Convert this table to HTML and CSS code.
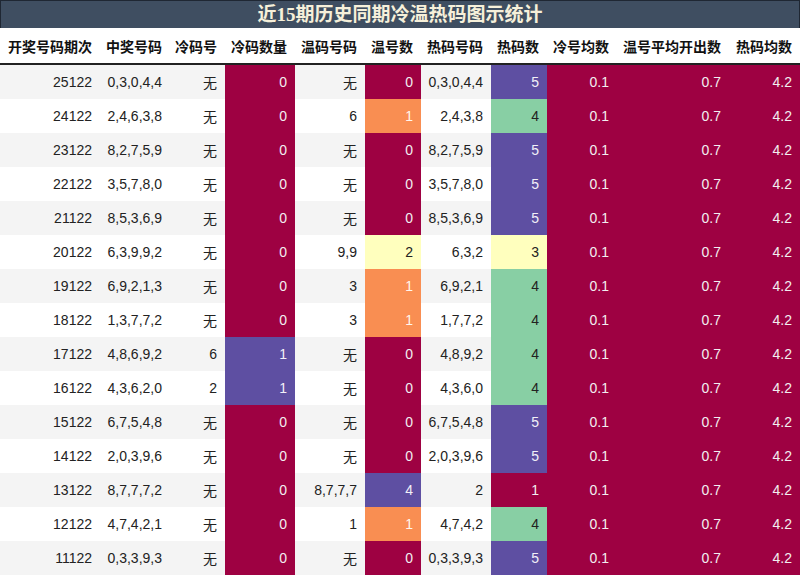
FILE: index.html
```html
<!DOCTYPE html>
<html>
<head>
<meta charset="utf-8">
<link rel="stylesheet" href="styles.css">
</head>
<body>
<div class="title">近15期历史同期冷温热码图示统计</div>
<table class="stats">
<colgroup>
<col style="width:100px"><col style="width:70px"><col style="width:55px"><col style="width:70px"><col style="width:70px"><col style="width:56px"><col style="width:70px"><col style="width:56px"><col style="width:70px"><col style="width:112px"><col style="width:71px">
</colgroup>
<thead>
<tr><th>开奖号码期次</th><th>中奖号码</th><th>冷码号</th><th>冷码数量</th><th>温码号码</th><th>温号数</th><th>热码号码</th><th>热码数</th><th>冷号均数</th><th>温号平均开出数</th><th>热码均数</th></tr>
</thead>
<tbody>
<tr><td>25122</td><td>0,3,0,4,4</td><td>无</td><td class="red">0</td><td>无</td><td class="red">0</td><td>0,3,0,4,4</td><td class="purple">5</td><td class="red">0.1</td><td class="red">0.7</td><td class="red">4.2</td></tr>
<tr><td>24122</td><td>2,4,6,3,8</td><td>无</td><td class="red">0</td><td>6</td><td class="orange">1</td><td>2,4,3,8</td><td class="green">4</td><td class="red">0.1</td><td class="red">0.7</td><td class="red">4.2</td></tr>
<tr><td>23122</td><td>8,2,7,5,9</td><td>无</td><td class="red">0</td><td>无</td><td class="red">0</td><td>8,2,7,5,9</td><td class="purple">5</td><td class="red">0.1</td><td class="red">0.7</td><td class="red">4.2</td></tr>
<tr><td>22122</td><td>3,5,7,8,0</td><td>无</td><td class="red">0</td><td>无</td><td class="red">0</td><td>3,5,7,8,0</td><td class="purple">5</td><td class="red">0.1</td><td class="red">0.7</td><td class="red">4.2</td></tr>
<tr><td>21122</td><td>8,5,3,6,9</td><td>无</td><td class="red">0</td><td>无</td><td class="red">0</td><td>8,5,3,6,9</td><td class="purple">5</td><td class="red">0.1</td><td class="red">0.7</td><td class="red">4.2</td></tr>
<tr><td>20122</td><td>6,3,9,9,2</td><td>无</td><td class="red">0</td><td>9,9</td><td class="yellow">2</td><td>6,3,2</td><td class="yellow">3</td><td class="red">0.1</td><td class="red">0.7</td><td class="red">4.2</td></tr>
<tr><td>19122</td><td>6,9,2,1,3</td><td>无</td><td class="red">0</td><td>3</td><td class="orange">1</td><td>6,9,2,1</td><td class="green">4</td><td class="red">0.1</td><td class="red">0.7</td><td class="red">4.2</td></tr>
<tr><td>18122</td><td>1,3,7,7,2</td><td>无</td><td class="red">0</td><td>3</td><td class="orange">1</td><td>1,7,7,2</td><td class="green">4</td><td class="red">0.1</td><td class="red">0.7</td><td class="red">4.2</td></tr>
<tr><td>17122</td><td>4,8,6,9,2</td><td>6</td><td class="purple">1</td><td>无</td><td class="red">0</td><td>4,8,9,2</td><td class="green">4</td><td class="red">0.1</td><td class="red">0.7</td><td class="red">4.2</td></tr>
<tr><td>16122</td><td>4,3,6,2,0</td><td>2</td><td class="purple">1</td><td>无</td><td class="red">0</td><td>4,3,6,0</td><td class="green">4</td><td class="red">0.1</td><td class="red">0.7</td><td class="red">4.2</td></tr>
<tr><td>15122</td><td>6,7,5,4,8</td><td>无</td><td class="red">0</td><td>无</td><td class="red">0</td><td>6,7,5,4,8</td><td class="purple">5</td><td class="red">0.1</td><td class="red">0.7</td><td class="red">4.2</td></tr>
<tr><td>14122</td><td>2,0,3,9,6</td><td>无</td><td class="red">0</td><td>无</td><td class="red">0</td><td>2,0,3,9,6</td><td class="purple">5</td><td class="red">0.1</td><td class="red">0.7</td><td class="red">4.2</td></tr>
<tr><td>13122</td><td>8,7,7,7,2</td><td>无</td><td class="red">0</td><td>8,7,7,7</td><td class="purple">4</td><td>2</td><td class="red">1</td><td class="red">0.1</td><td class="red">0.7</td><td class="red">4.2</td></tr>
<tr><td>12122</td><td>4,7,4,2,1</td><td>无</td><td class="red">0</td><td>1</td><td class="orange">1</td><td>4,7,4,2</td><td class="green">4</td><td class="red">0.1</td><td class="red">0.7</td><td class="red">4.2</td></tr>
<tr><td>11122</td><td>0,3,3,9,3</td><td>无</td><td class="red">0</td><td>无</td><td class="red">0</td><td>0,3,3,9,3</td><td class="purple">5</td><td class="red">0.1</td><td class="red">0.7</td><td class="red">4.2</td></tr>
</tbody>
</table>
</body>
</html>
```
FILE: styles.css
```css
html, body {
  margin: 0;
  padding: 0;
  background: #ffffff;
}
body {
  width: 800px;
  height: 576px;
  overflow: hidden;
  font-family: "Liberation Sans", "Noto Sans CJK SC", sans-serif;
  color: #1a1a1a;
}
.title {
  box-sizing: border-box;
  height: 28px;
  background: #3f4e61;
  border: 1px solid #1f2733;
  border-bottom: none;
  color: #f6f0da;
  font-family: "Liberation Serif", "Noto Sans CJK SC", serif;
  font-weight: bold;
  font-size: 19px;
  line-height: 27px;
  text-align: center;
}
.stats {
  width: 800px;
  table-layout: fixed;
  border-collapse: collapse;
  font-size: 14px;
}
.stats th {
  height: 35px;
  padding: 0 8px 0 0;
  text-align: right;
  font-weight: bold;
  font-size: 14px;
  color: #111;
  background: #ffffff;
  border-bottom: 2px solid #222;
  white-space: nowrap;
}
.stats td {
  height: 34px;
  padding: 0 8px 0 0;
  text-align: right;
  white-space: nowrap;
  color: #222;
}
.stats tbody tr:nth-child(odd) td {
  background: #f4f4f4;
}
.stats tbody tr:nth-child(even) td {
  background: #ffffff;
}
.stats tbody tr td.red {
  background: #9e0142;
  color: #f2eef0;
}
.stats tbody tr td.purple {
  background: #5e4fa2;
  color: #f2f0f8;
}
.stats tbody tr td.orange {
  background: #f98e52;
  color: #fff6ee;
}
.stats tbody tr td.yellow {
  background: #ffffbe;
  color: #222;
}
.stats tbody tr td.green {
  background: #88cfa4;
  color: #222;
}
```
